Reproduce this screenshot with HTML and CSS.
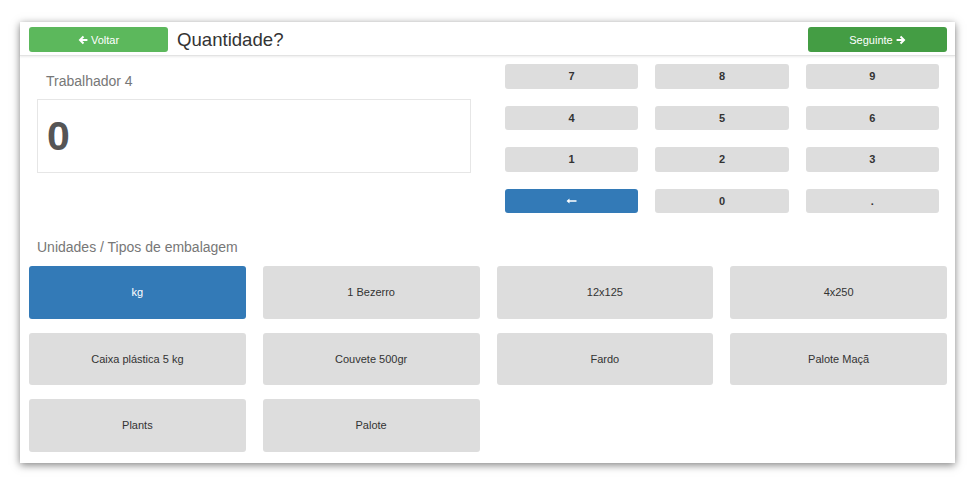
FILE: index.html
```html
<!DOCTYPE html>
<html lang="pt">
    <head>
        <meta charset="UTF-8">
        <meta name="viewport" content="width=device-width, initial-scale=1.0">
        <title>Quantidade</title>
        <link rel="stylesheet" href="styles.css">
    </head>
    <body>
        <div class="card">
            <div class="top-bar">
                <button class="btn btn-back">
                    <svg class="ico" width="10" height="10" viewBox="0 0 10 10"><path d="M4.8 0.8 L0.6 5 L4.8 9.2 L6.2 7.8 L4.3 6 H9.4 V4 H4.3 L6.2 2.2 Z" fill="#fff"/></svg>
                    Voltar
                </button>
                <h1 class="title">Quantidade?</h1>
                <button class="btn btn-next">
                    Seguinte
                    <svg class="ico" width="10" height="10" viewBox="0 0 10 10"><path d="M5.2 0.8 L9.4 5 L5.2 9.2 L3.8 7.8 L5.7 6 H0.6 V4 H5.7 L3.8 2.2 Z" fill="#fff"/></svg>
                </button>
            </div>

            <div class="content">
                <div class="qty-row">
                    <div class="qty-left">
                        <div class="worker">Trabalhador 4</div>
                        <div class="display">0</div>
                    </div>
                    <div class="keypad">
                        <button class="key">7</button>
                        <button class="key">8</button>
                        <button class="key">9</button>
                        <button class="key">4</button>
                        <button class="key">5</button>
                        <button class="key">6</button>
                        <button class="key">1</button>
                        <button class="key">2</button>
                        <button class="key">3</button>
                        <button class="key key-del">
                            <svg width="11" height="6" viewBox="0 0 11 6"><path d="M0.5 3 L3.5 0.5 V2.3 H10.5 V3.7 H3.5 V5.5 Z" fill="#fff"/></svg>
                        </button>
                        <button class="key">0</button>
                        <button class="key">.</button>
                    </div>
                </div>

                <div class="units-label">Unidades / Tipos de embalagem</div>
                <div class="units">
                    <button class="unit active">kg</button>
                    <button class="unit">1 Bezerro</button>
                    <button class="unit">12x125</button>
                    <button class="unit">4x250</button>
                    <button class="unit">Caixa plástica 5 kg</button>
                    <button class="unit">Couvete 500gr</button>
                    <button class="unit">Fardo</button>
                    <button class="unit">Palote Maçã</button>
                    <button class="unit">Plants</button>
                    <button class="unit">Palote</button>
                </div>
            </div>
        </div>
    </body>
</html>
```

FILE: styles.css
```css
* {
    box-sizing: border-box;
}
html, body {
    height: 100%;
}
body {
    margin: 0;
    padding-top: 22px;
    background-color: #fff;
    font-family: "Liberation Sans", Arial, sans-serif;
    color: #333;
}
button {
    font-family: "Liberation Sans", Arial, sans-serif;
    border: none;
    cursor: pointer;
}
.card {
    margin-left: 20px;
    width: 935px;
    height: 441px;
    background-color: #fff;
    box-shadow: 0 2px 8px rgba(0, 0, 0, 0.5);
}
.top-bar {
    display: flex;
    align-items: flex-start;
    height: 34px;
    padding: 5px 8px 0 9px;
    border-bottom: 1px solid #e3e3e3;
    box-shadow: 0 1px 2px rgba(0, 0, 0, 0.08);
}
.btn {
    width: 139px;
    height: 25px;
    border-radius: 3px;
    color: #fff;
    font-size: 11px;
    display: flex;
    align-items: center;
    justify-content: center;
    gap: 3px;
}
.btn-back {
    background-color: #5cb85c;
}
.btn-next {
    margin-left: auto;
    background-color: #449d44;
}
.title {
    margin: 0 0 0 9px;
    font-size: 18.6px;
    font-weight: normal;
    line-height: 26px;
    color: #333;
}
.content {
    padding: 0 8px 0 9px;
}
.qty-row {
    display: grid;
    grid-template-columns: 1fr 1fr;
    column-gap: 34px;
    padding: 0 8px;
}
.qty-left {
    padding-top: 15px;
}
.worker {
    padding-left: 9px;
    font-size: 14px;
    line-height: 20px;
    color: #777;
    margin-bottom: 8px;
}
.display {
    height: 74px;
    border: 1px solid #e6e6e6;
    padding-left: 9px;
    display: flex;
    align-items: center;
    font-size: 41px;
    font-weight: bold;
    color: #555;
}
.keypad {
    display: grid;
    grid-template-columns: repeat(3, 1fr);
    column-gap: 17px;
    row-gap: 17px;
    padding-top: 8px;
}
.key {
    height: 24.5px;
    border-radius: 3px;
    background-color: #dddddd;
    color: #333;
    font-size: 11px;
    font-weight: bold;
    display: flex;
    align-items: center;
    justify-content: center;
}
.key-del {
    background-color: #337ab7;
}
.units-label {
    margin: 24px 0 9px 8px;
    font-size: 14px;
    line-height: 20px;
    color: #777;
}
.units {
    display: grid;
    grid-template-columns: repeat(4, 1fr);
    column-gap: 17px;
    row-gap: 14px;
}
.unit {
    height: 52.5px;
    border-radius: 3px;
    background-color: #dddddd;
    color: #333;
    font-size: 11px;
}
.unit.active {
    background-color: #337ab7;
    color: #fff;
}
```
